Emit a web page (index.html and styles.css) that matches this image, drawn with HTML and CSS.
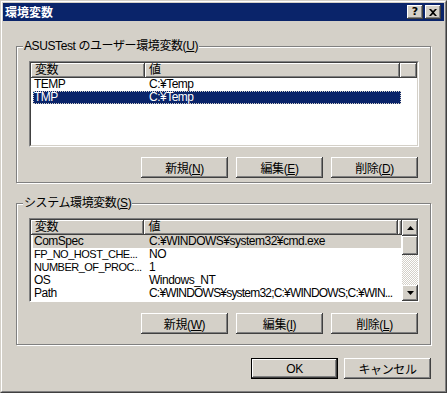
FILE: index.html
```html
<!DOCTYPE html>
<html lang="ja">
<head>
    <meta charset="UTF-8">
    <title>環境変数</title>
    <link rel="stylesheet" href="styles.css">
</head>
<body>
    <div class="window">
        <div class="frame">
            <div class="titlebar">
                <span class="title">環境変数</span>
                <span class="caption-btn help">?</span>
                <span class="caption-btn close">
                    <svg width="8" height="7" viewBox="0 0 8 7"><path d="M0 0h2l2 2 2-2h2L5 3.5 8 7H6L4 5 2 7H0l3-3.5z" fill="#000"/></svg>
                </span>
            </div>
            <div class="content">
                <div class="group group-user">
                    <div class="group-label">ASUSTest のユーザー環境変数(<u>U</u>)</div>
                    <div class="listview list-user">
                        <div class="list-main">
                            <div class="list-header">
                                <span class="col col-name">変数</span>
                                <span class="col col-value">値</span>
                                <span class="col col-fill"></span>
                            </div>
                            <div class="list-rows">
                                <div class="row"><span class="cell-name">TEMP</span><span class="cell-value">C:¥Temp</span></div>
                                <div class="row selected focused"><span class="cell-name">TMP</span><span class="cell-value">C:¥Temp</span></div>
                            </div>
                        </div>
                    </div>
                    <div class="button-row">
                        <button class="btn">新規(<u>N</u>)</button>
                        <button class="btn">編集(<u>E</u>)</button>
                        <button class="btn">削除(<u>D</u>)</button>
                    </div>
                </div>

                <div class="group group-system">
                    <div class="group-label">システム環境変数(<u>S</u>)</div>
                    <div class="listview list-system">
                        <div class="list-main">
                            <div class="list-header">
                                <span class="col col-name">変数</span>
                                <span class="col col-value">値</span>
                                <span class="col col-fill"></span>
                            </div>
                            <div class="list-rows">
                                <div class="row inactive"><span class="cell-name">ComSpec</span><span class="cell-value">C:¥WINDOWS¥system32¥cmd.exe</span></div>
                                <div class="row"><span class="cell-name cut">FP_NO_HOST_CHE...</span><span class="cell-value">NO</span></div>
                                <div class="row"><span class="cell-name cut">NUMBER_OF_PROC...</span><span class="cell-value">1</span></div>
                                <div class="row"><span class="cell-name">OS</span><span class="cell-value">Windows_NT</span></div>
                                <div class="row"><span class="cell-name">Path</span><span class="cell-value cut">C:¥WINDOWS¥system32;C:¥WINDOWS;C:¥WIN...</span></div>
                                <div class="row"><span class="cell-name">PATHEXT</span><span class="cell-value">.COM;.EXE;.BAT;.CMD;.VBS;.VBE;.JS;.JSE;.WS...</span></div>
                            </div>
                        </div>
                        <div class="scrollbar">
                            <span class="sb-btn">
                                <svg width="7" height="4" viewBox="0 0 7 4"><path d="M3.5 0L7 4H0z" fill="#000"/></svg>
                            </span>
                            <span class="sb-thumb"></span>
                            <span class="sb-track"></span>
                            <span class="sb-btn">
                                <svg width="7" height="4" viewBox="0 0 7 4"><path d="M0 0h7L3.5 4z" fill="#000"/></svg>
                            </span>
                        </div>
                    </div>
                    <div class="button-row">
                        <button class="btn">新規(<u>W</u>)</button>
                        <button class="btn">編集(<u>I</u>)</button>
                        <button class="btn">削除(<u>L</u>)</button>
                    </div>
                </div>

                <div class="footer">
                    <button class="btn btn-default">OK</button>
                    <button class="btn">キャンセル</button>
                </div>
            </div>
        </div>
    </div>
</body>
</html>
```

FILE: styles.css
```css
body {
    margin: 0;
    padding: 0;
    background-color: #d4d0c8;
    font-family: "Liberation Sans", "Noto Sans CJK JP", sans-serif;
    font-size: 12px;
    letter-spacing: -0.4px;
    color: #000;
}

.window {
    width: 447px;
    height: 393px;
    box-sizing: border-box;
    border: 1px solid;
    border-color: #d4d0c8 #404040 #404040 #d4d0c8;
    background-color: #d4d0c8;
}

.frame {
    height: 100%;
    box-sizing: border-box;
    border: 1px solid;
    border-color: #fff #808080 #808080 #fff;
    padding: 1px;
    display: flex;
    flex-direction: column;
}

/* title bar */
.titlebar {
    height: 18px;
    flex: none;
    background-color: #0a246a;
    display: flex;
    align-items: center;
    gap: 2px;
    padding: 0 3px 0 2px;
}

.title {
    flex: 1;
    color: #fff;
    font-family: "Noto Sans CJK JP", sans-serif;
    font-weight: bold;
    font-size: 12px;
    letter-spacing: 0;
    line-height: 18px;
}

.caption-btn {
    width: 16px;
    height: 14px;
    box-sizing: border-box;
    background-color: #d4d0c8;
    display: flex;
    align-items: center;
    justify-content: center;
    box-shadow: inset -1px -1px #404040, inset 1px 1px #fff, inset -2px -2px #808080;
}

.help {
    font-family: "DejaVu Sans", sans-serif;
    font-weight: bold;
    font-size: 11px;
    letter-spacing: 0;
    line-height: 14px;
}

/* dialog content */
.content {
    flex: 1;
    padding: 25px 13px 0 13px;
}

.group {
    border: 1px solid #808080;
    box-shadow: inset 1px 1px #fff, 1px 1px #fff;
    padding: 0 11px 4px 12px;
}

.group-system {
    margin-top: 20px;
    padding-bottom: 10px;
}

.group-label {
    width: fit-content;
    margin: -7px 0 0 -6px;
    padding: 0 1px;
    line-height: 13px;
    background-color: #d4d0c8;
}

/* list views */
.listview {
    width: 390px;
    margin-top: 8px;
    box-sizing: border-box;
    border: 1px solid;
    border-color: #808080 #fff #fff #808080;
    background-color: #fff;
    display: flex;
}

.list-main {
    flex: 1;
    overflow: hidden;
    border-top: 1px solid #404040;
    border-left: 1px solid #404040;
}

.list-user {
    height: 86px;
}

.list-user .list-main {
    border-right: 1px solid #d4d0c8;
    border-bottom: 1px solid #d4d0c8;
}

.list-system {
    height: 84px;
}

.list-header {
    display: flex;
    height: 15px;
}

.col {
    box-sizing: border-box;
    background-color: #d4d0c8;
    box-shadow: inset -1px -1px #404040, inset 1px 1px #fff, inset -2px -2px #808080;
    padding-left: 4px;
    line-height: 15px;
}

.col-name {
    width: 114px;
}

.col-value {
    width: 255px;
}

.col-fill {
    flex: 1;
}

.list-rows {
    padding-left: 2px;
}

.row {
    width: 368px;
    height: 13px;
    line-height: 13px;
    display: flex;
    white-space: nowrap;
    box-sizing: border-box;
    letter-spacing: -0.5px;
}

.row.selected {
    background-color: #0a246a;
    color: #fff;
}

.row.focused {
    outline: 1px dotted #d4d0c8;
    outline-offset: -1px;
}

.row.inactive {
    background-color: #d4d0c8;
}

.cell-name {
    flex: none;
    width: 111px;
    padding-left: 1px;
    box-sizing: border-box;
}

.cell-name.cut {
    font-size: 11px;
    letter-spacing: -0.5px;
}

.cell-value {
    flex: 1;
    min-width: 0;
    padding-left: 5px;
    overflow: hidden;
}

.cell-value.cut {
    letter-spacing: -0.8px;
}

/* scroll bar */
.scrollbar {
    width: 16px;
    flex: none;
    display: flex;
    flex-direction: column;
    border-top: 1px solid #404040;
    background: repeating-conic-gradient(#d4d0c8 0 25%, #fff 0 50%) 0 0 / 2px 2px;
}

.sb-btn,
.sb-thumb {
    height: 16px;
    flex: none;
    background-color: #d4d0c8;
    box-shadow: inset -1px -1px #404040, inset 1px 1px #fff, inset -2px -2px #808080;
    display: flex;
    align-items: center;
    justify-content: center;
}

.sb-thumb {
    height: 19px;
}

.sb-track {
    flex: 1;
}

/* buttons */
.button-row {
    display: flex;
    justify-content: flex-end;
    gap: 8px;
    margin-top: 10px;
    padding-right: 1px;
}

.group-system .button-row {
    margin-top: 11px;
}

.btn {
    width: 87px;
    height: 21px;
    padding: 0;
    border: none;
    box-sizing: border-box;
    background-color: #d4d0c8;
    font-family: "Liberation Sans", "Noto Sans CJK JP", sans-serif;
    font-size: 12px;
    letter-spacing: -0.4px;
    color: #000;
    box-shadow: inset -1px -1px #404040, inset 1px 1px #fff, inset -2px -2px #808080;
}

.btn-default {
    border: 1px solid #000;
}

.footer {
    display: flex;
    justify-content: flex-end;
    gap: 6px;
    margin-top: 13px;
}
```
